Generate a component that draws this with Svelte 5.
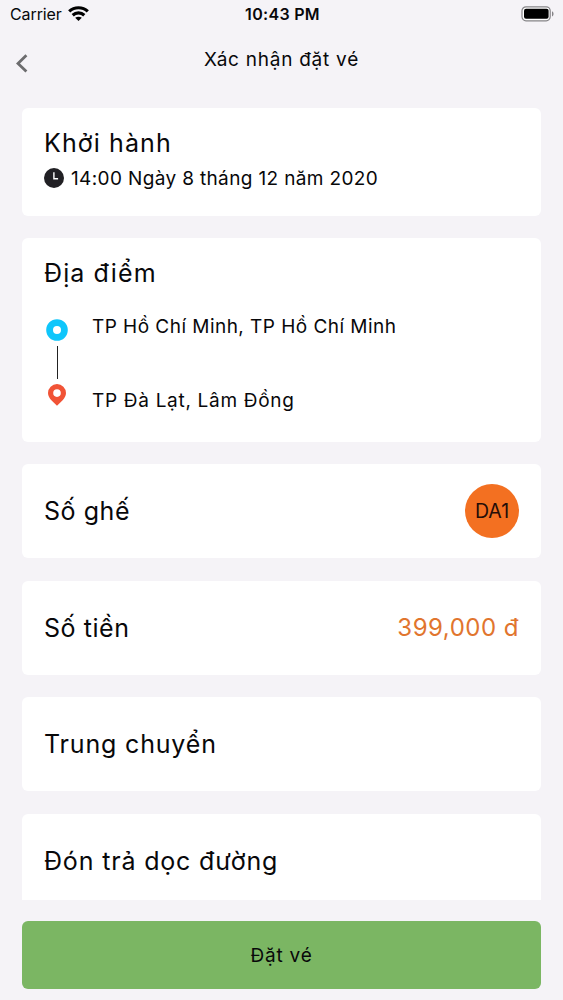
<script>
  const time = "10:43 PM";

  const trip = {
    departure: "14:00 Ngày 8 tháng 12 năm 2020",
    from: "TP Hồ Chí Minh, TP Hồ Chí Minh",
    to: "TP Đà Lạt, Lâm Đồng",
    seats: ["DA1"],
    price: "399,000 đ",
  };
</script>

<div class="screen">
  <div class="status-bar">
    <div class="carrier">
      <span>Carrier</span>
      <svg width="21" height="15" viewBox="0 0 21 15">
        <g fill="none" stroke="#000" stroke-width="3.2">
          <path d="M1.2 5.4C6.4 .5 14.6 .5 19.8 5.4" />
          <path d="M4.7 9.2C8 6.2 13 6.2 16.3 9.2" />
        </g>
        <path d="M7.2 11.8c2-1.5 4.6-1.5 6.6 0L10.5 15z" />
      </svg>
    </div>
    <span class="time">{time}</span>
    <div class="battery">
      <svg width="34" height="16" viewBox="0 0 34 16">
        <rect x="1" y=".8" width="28.2" height="14" rx="4" fill="#fff" stroke="#858487" stroke-width="1.2" />
        <rect x="3" y="2.8" width="24.6" height="10" rx="2" />
        <path d="M31 5.2c2 .8 2 4.4 0 5.2z" fill="#858487" />
      </svg>
    </div>
  </div>

  <header class="nav">
    <button class="back" aria-label="Quay lại">
      <svg width="12" height="19" viewBox="0 0 12 19">
        <path d="M10.4 1.3L2 9.4l8.4 8.1" fill="none" stroke="#6c6c6e" stroke-width="2.8" />
      </svg>
    </button>
    <h1>Xác nhận đặt vé</h1>
  </header>

  <main class="content">
    <section class="card departure">
      <h2 class="wide">Khởi hành</h2>
      <div class="date-row">
        <svg width="20" height="20" viewBox="0 0 20 20">
          <circle cx="10" cy="10" r="10" fill="#212024" />
          <path d="M9.9 4.2v6.6h4.2" fill="none" stroke="#fff" stroke-width="1.4" />
        </svg>
        <span>{trip.departure}</span>
      </div>
    </section>

    <section class="card places">
      <h2 class="wide">Địa điểm</h2>
      <div class="route">
        <div class="route-marks">
          <svg width="22" height="22" viewBox="0 0 22 22">
            <circle cx="11" cy="11" r="7.4" fill="none" stroke="#0fc6fb" stroke-width="6.8" />
          </svg>
          <div class="route-line"></div>
          <svg width="18" height="22" viewBox="0 0 18 22">
            <path
              d="M9 0a9 9 0 0 0-9 9c0 3 1.5 5 3.1 6.9L9 21.8l5.9-5.9C16.5 14 18 12 18 9a9 9 0 0 0-9-9zm0 5.3a3.8 3.8 0 1 1 0 7.6 3.8 3.8 0 0 1 0-7.6z"
              fill="#f15336"
            />
          </svg>
        </div>
        <div class="route-names">
          <span>{trip.from}</span>
          <span class="route-to">{trip.to}</span>
        </div>
      </div>
    </section>

    <section class="card row">
      <h2 class="narrow">Số ghế</h2>
      {#each trip.seats as seat}
        <span class="seat">{seat}</span>
      {/each}
    </section>

    <section class="card row">
      <h2 class="narrow">Số tiền</h2>
      <span class="price">{trip.price}</span>
    </section>

    <section class="card row">
      <h2>Trung chuyển</h2>
    </section>

    <section class="card row">
      <h2>Đón trả dọc đường</h2>
    </section>
  </main>

  <footer>
    <button class="submit">Đặt vé</button>
  </footer>
</div>

<style>
  :global(body) {
    background: #f5f3f7;
  }

  .screen {
    display: flex;
    flex-direction: column;
    width: 563px;
    height: 1000px;
    overflow: hidden;
    background: #f5f3f7;
    color: #08080a;
    font-family: Inter, "Open Sans", sans-serif;
  }

  svg {
    display: block;
    flex: none;
  }

  h1,
  h2 {
    margin: 0;
    font-weight: 400;
    white-space: nowrap;
  }

  button {
    border: 0;
    padding: 0;
    font-family: inherit;
    color: inherit;
    cursor: pointer;
  }

  .status-bar {
    display: grid;
    grid-template-columns: 1fr auto 1fr;
    align-items: center;
    height: 28px;
    padding: 0 8px 0 10px;
    font-size: 16px;
  }

  .carrier {
    display: flex;
    align-items: center;
    gap: 6px;
  }

  .carrier span {
    letter-spacing: -0.1px;
  }

  .carrier svg {
    margin-top: -2px;
  }

  .time {
    font-weight: 600;
    letter-spacing: 0.3px;
  }

  .battery {
    justify-self: end;
  }

  .nav {
    display: grid;
    grid-template-columns: 40px 1fr 40px;
    align-items: center;
    height: 80px;
    box-sizing: border-box;
    padding-bottom: 16px;
  }

  .back {
    justify-self: start;
    margin: 7px 0 0 16px;
    background: none;
  }

  h1 {
    text-align: center;
    font-size: 19px;
    line-height: 24px;
    letter-spacing: 0.75px;
  }

  .content {
    flex: none;
    display: flex;
    flex-direction: column;
    gap: 22.4px;
    height: 792px;
    padding: 0 22px;
    overflow: hidden;
  }

  .card {
    flex: none;
    box-sizing: border-box;
    padding: 0 22px;
    border-radius: 6px;
    background: #fff;
  }

  h2 {
    font-size: 25px;
    line-height: 30px;
    letter-spacing: 0.83px;
  }

  .wide {
    letter-spacing: 1.1px;
  }

  .narrow {
    letter-spacing: 0.55px;
  }

  .departure {
    height: 107.8px;
    padding-top: 20px;
  }

  .date-row {
    display: flex;
    align-items: center;
    gap: 7px;
    margin-top: 8px;
    font-size: 19px;
    line-height: 24px;
    letter-spacing: 0.36px;
    white-space: nowrap;
  }

  .date-row span {
    padding-top: 1px;
    margin-bottom: -1px;
  }

  .date-row svg {
    margin-top: -1px;
  }

  .places {
    height: 203.4px;
    padding-top: 20px;
  }

  .route {
    display: flex;
    margin-top: 26px;
  }

  .route-marks {
    display: flex;
    flex-direction: column;
    align-items: center;
    width: 26px;
    padding-top: 5px;
  }

  .route-line {
    width: 1px;
    height: 33px;
    margin: 5px 0;
    background: #222;
  }

  .route-names {
    display: flex;
    flex-direction: column;
    gap: 50px;
    margin-left: 22px;
    padding-top: 1px;
    font-size: 19px;
    line-height: 24px;
    letter-spacing: 0.46px;
    white-space: nowrap;
  }

  .route-to {
    letter-spacing: 0.7px;
  }

  .row {
    display: flex;
    align-items: center;
    justify-content: space-between;
    height: 94.2px;
  }

  .seat {
    display: flex;
    align-items: center;
    justify-content: center;
    width: 54px;
    height: 54px;
    border-radius: 50%;
    background: #f37021;
    color: #240d08;
    font-size: 19.5px;
  }

  .price {
    color: #e1752e;
    font-size: 24px;
    letter-spacing: 0.5px;
  }

  footer {
    padding: 21px 22px 0;
  }

  .submit {
    width: 100%;
    height: 68px;
    border-radius: 6px;
    background: #7bb663;
    font-size: 19px;
    letter-spacing: 0.8px;
  }
</style>
